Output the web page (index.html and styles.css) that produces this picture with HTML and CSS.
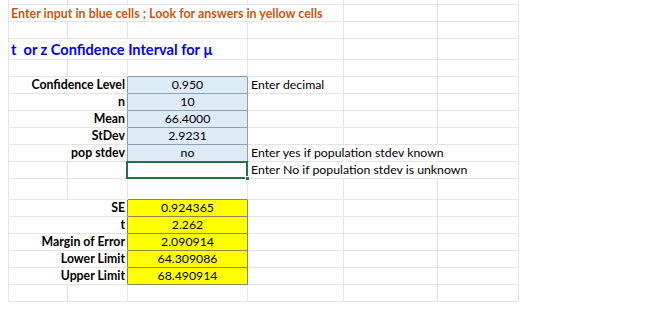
FILE: index.html
```html
<!DOCTYPE html>
<html>
<head>
<meta charset="utf-8">
<link rel="stylesheet" href="styles.css">
</head>
<body>
<div class="sheet">
  <div class="c"></div><div class="c"></div><div class="c"></div><div class="c"></div><div class="c"></div><div class="c"></div>

  <div class="c span4 header">Enter input in blue cells ; Look for answers in yellow cells</div><div class="c"></div><div class="c"></div>

  <div class="c"></div><div class="c"></div><div class="c"></div><div class="c"></div><div class="c"></div><div class="c"></div>

  <div class="c span3 title">t&nbsp; or z Confidence Interval for µ</div><div class="c"></div><div class="c"></div><div class="c"></div>

  <div class="c"></div><div class="c"></div><div class="c above-blue"></div><div class="c"></div><div class="c"></div><div class="c"></div>

  <div class="c span2 label lb-blue">Confidence Level</div><div class="c val blue">0.950</div><div class="c note">Enter decimal</div><div class="c"></div><div class="c"></div>
  <div class="c span2 label lb-blue">n</div><div class="c val blue">10</div><div class="c"></div><div class="c"></div><div class="c"></div>
  <div class="c span2 label lb-blue">Mean</div><div class="c val blue">66.4000</div><div class="c"></div><div class="c"></div><div class="c"></div>
  <div class="c span2 label lb-blue">StDev</div><div class="c val blue">2.9231</div><div class="c"></div><div class="c"></div><div class="c"></div>
  <div class="c span2 label lb-blue">pop stdev</div><div class="c val blue">no</div><div class="c span3 note">Enter yes if population stdev known</div>

  <div class="c"></div><div class="c"></div><div class="c val selected"></div><div class="c span3 note">Enter No if population stdev is unknown</div>

  <div class="c"></div><div class="c"></div><div class="c above-yellow"></div><div class="c"></div><div class="c"></div><div class="c"></div>

  <div class="c span2 label lb-yellow">SE</div><div class="c val yellow">0.924365</div><div class="c"></div><div class="c"></div><div class="c"></div>
  <div class="c span2 label lb-yellow">t</div><div class="c val yellow">2.262</div><div class="c"></div><div class="c"></div><div class="c"></div>
  <div class="c span2 label lb-yellow">Margin of Error</div><div class="c val yellow">2.090914</div><div class="c"></div><div class="c"></div><div class="c"></div>
  <div class="c span2 label lb-yellow">Lower Limit</div><div class="c val yellow">64.309086</div><div class="c"></div><div class="c"></div><div class="c"></div>
  <div class="c span2 label lb-yellow">Upper Limit</div><div class="c val yellow">68.490914</div><div class="c"></div><div class="c"></div><div class="c"></div>

  <div class="c"></div><div class="c"></div><div class="c"></div><div class="c"></div><div class="c"></div><div class="c"></div>
</div>
</body>
</html>
```

FILE: styles.css
```css
html, body {
  margin: 0;
  padding: 0;
  background: #ffffff;
}

body {
  font-family: Lato, "Open Sans", sans-serif;
  font-size: 12.3px;
  color: #000000;
}

.sheet {
  margin-left: 8px;
  width: 510px;
  display: grid;
  grid-template-columns: 59px 60px 120px 96px 94px 81px;
  grid-template-rows: 5px 17px 17px 21px 17px 17px 17px 17px 17px 17px 17px 21px 17px 17px 17px 17px 17px 17px;
  border-left: 1px solid #e4e4e4;
}

.c {
  box-sizing: border-box;
  border-right: 1px solid #e4e4e4;
  border-bottom: 1px solid #e4e4e4;
  white-space: nowrap;
  display: flex;
  align-items: center;
  line-height: 1;
  min-width: 0;
}

.span2 { grid-column: span 2; }
.span3 { grid-column: span 3; }
.span4 { grid-column: span 4; }

.header {
  color: #c65911;
  font-weight: bold;
  font-size: 12.45px;
  padding-left: 2px;
  padding-top: 2px;
}

.title {
  color: #0000ff;
  font-weight: bold;
  font-size: 14.6px;
  padding-left: 2px;
  padding-top: 2px;
}

.label {
  justify-content: flex-end;
  font-weight: bold;
  padding-right: 2px;
  padding-top: 1px;
}

.note {
  padding-left: 3px;
  padding-top: 1px;
}

.val {
  justify-content: center;
  padding-top: 1px;
}

.blue {
  background: #ddebf7;
  border-right-color: #8d9fb5;
  border-bottom-color: #8d9fb5;
}

.lb-blue { border-right-color: #8d9fb5; }
.above-blue { border-bottom-color: #8d9fb5; }

.yellow {
  background: #ffff00;
  border-right-color: #8a8a55;
  border-bottom-color: #8a8a55;
}

.lb-yellow { border-right-color: #8a8a55; }
.above-yellow { border-bottom-color: #8a8a55; }

.selected {
  position: relative;
}

.selected::after {
  content: "";
  position: absolute;
  left: -2px;
  top: -1px;
  right: -1px;
  bottom: -1px;
  border: 2px solid #217346;
}

.selected::before {
  content: "";
  position: absolute;
  right: -3px;
  bottom: -3px;
  width: 5px;
  height: 5px;
  background: #217346;
  border: 1px solid #ffffff;
  box-sizing: border-box;
  z-index: 1;
}
```
